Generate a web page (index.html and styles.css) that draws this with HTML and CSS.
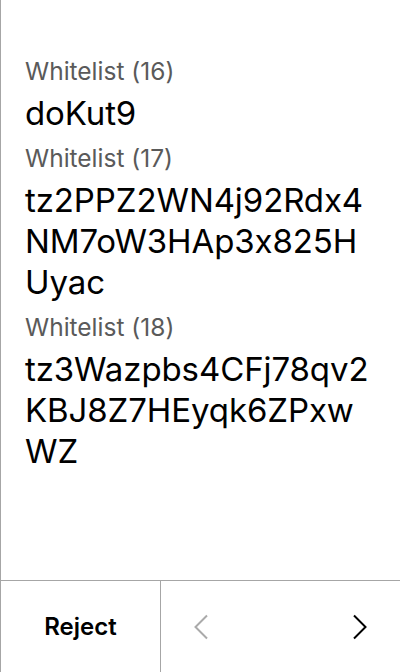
FILE: index.html
```html
<!DOCTYPE html>
<html>
<head>
<meta charset="utf-8">
<link rel="stylesheet" href="styles.css">
</head>
<body>
<div class="screen">
  <div class="content">
    <div class="item">
      <div class="label">Whitelist (16)</div>
      <div class="value">doKut9</div>
    </div>
    <div class="item">
      <div class="label">Whitelist (17)</div>
      <div class="value">tz2PPZ2WN4j92Rdx4NM7oW3HAp3x825HUyac</div>
    </div>
    <div class="item">
      <div class="label">Whitelist (18)</div>
      <div class="value">tz3Wazpbs4CFj78qv2KBJ8Z7HEyqk6ZPxwWZ</div>
    </div>
  </div>
  <div class="footer">
    <div class="reject">Reject</div>
    <div class="nav">
      <div class="navbtn prev">
        <svg width="16" height="26" viewBox="0 0 16 26"><path d="M14 1.5 L2.5 13 L14 24.5" fill="none" stroke="#aaaaaa" stroke-width="2"/></svg>
      </div>
      <div class="navbtn next">
        <svg width="16" height="26" viewBox="0 0 16 26"><path d="M2 1.5 L13.5 13 L2 24.5" fill="none" stroke="#000000" stroke-width="2"/></svg>
      </div>
    </div>
  </div>
</div>
</body>
</html>
```
FILE: styles.css
```css
html, body {
  margin: 0;
  padding: 0;
  background: #ffffff;
}
.screen {
  width: 400px;
  height: 672px;
  box-sizing: border-box;
  border-left: 1px solid #a6a6a6;
  display: flex;
  flex-direction: column;
  font-family: Inter, "Noto Sans", sans-serif;
  font-feature-settings: "calt" 0;
}
.content {
  flex: 1;
  padding: 55px 28px 0 24px;
}
.item {
  margin-bottom: 8px;
}
.label {
  font-size: 24.5px;
  line-height: 32px;
  color: #5a5a5a;
  margin-bottom: 6px;
}
.value {
  font-size: 33px;
  line-height: 41px;
  letter-spacing: -0.1px;
  color: #000000;
  word-break: break-all;
}
.footer {
  height: 92px;
  border-top: 1px solid #a6a6a6;
  display: flex;
  box-sizing: border-box;
}
.reject {
  width: 160px;
  box-sizing: border-box;
  border-right: 1px solid #a6a6a6;
  display: flex;
  align-items: center;
  justify-content: center;
  font-size: 24px;
  font-weight: 600;
  color: #000;
}
.nav {
  flex: 1;
  display: flex;
  justify-content: space-between;
}
.navbtn {
  width: 80px;
  display: flex;
  align-items: center;
  justify-content: center;
}
```
